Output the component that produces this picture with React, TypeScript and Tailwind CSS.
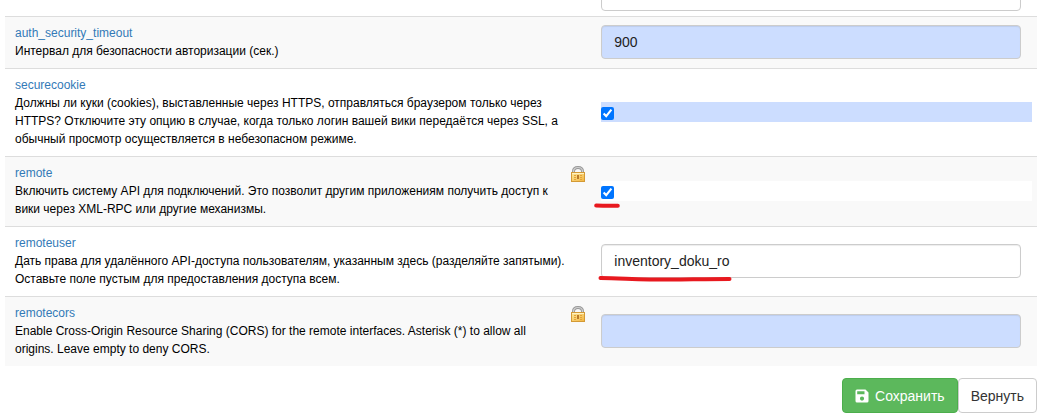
import React, { ReactNode } from "react";

interface Setting {
  id: string;
  description: string;
  type: "text" | "checkbox";
  value?: string;
  isDefault?: boolean;
  locked?: boolean;
  mark?: ReactNode;
}

const settings: Setting[] = [
  {
    id: "auth_security_timeout",
    description: "Интервал для безопасности авторизации (сек.)",
    type: "text",
    value: "900",
    isDefault: true,
  },
  {
    id: "securecookie",
    description:
      "Должны ли куки (cookies), выставленные через HTTPS, отправляться браузером только через\nHTTPS? Отключите эту опцию в случае, когда только логин вашей вики передаётся через SSL, а\nобычный просмотр осуществляется в небезопасном режиме.",
    type: "checkbox",
    isDefault: true,
  },
  {
    id: "remote",
    description:
      "Включить систему API для подключений. Это позволит другим приложениям получить доступ к\nвики через XML-RPC или другие механизмы.",
    type: "checkbox",
    locked: true,
    mark: (
      <svg className="pointer-events-none absolute -left-2 top-5" width="30" height="10" viewBox="0 0 30 10" fill="none" aria-hidden="true">
        <path d="M3.200 4.500 Q14 5 24.800 4.700" stroke="#e8191f" strokeWidth="4" strokeLinecap="round" />
      </svg>
    ),
  },
  {
    id: "remoteuser",
    description:
      "Дать права для удалённого API-доступа пользователям, указанным здесь (разделяйте запятыми).\nОставьте поле пустым для предоставления доступа всем.",
    type: "text",
    value: "inventory_doku_ro",
    mark: (
      <svg className="pointer-events-none absolute -left-1 top-7" width="140" height="12" viewBox="0 0 140 12" fill="none" aria-hidden="true">
        <path d="M3.5 6 C30 6.6 50 7.8 75 7.6 C95 7.4 115 7 132.5 7" stroke="#e8191f" strokeWidth="4" strokeLinecap="round" />
      </svg>
    ),
  },
  {
    id: "remotecors",
    description:
      "Enable Cross-Origin Resource Sharing (CORS) for the remote interfaces. Asterisk (*) to allow all\norigins. Leave empty to deny CORS.",
    type: "text",
    value: "",
    isDefault: true,
    locked: true,
  },
];

const inputClass =
  "block h-[34px] w-full rounded border border-[#ccc] px-3 text-sm text-[#222] shadow-[inset_0_1px_1px_rgba(0,0,0,0.075)]";

function LockIcon() {
  return (
    <svg className="shrink-0" width="16" height="16" viewBox="0 0 16 16" role="img" aria-label="lock">
      <defs>
        <linearGradient id="lockBody" x1="0" y1="0" x2="1" y2="1">
          <stop offset="0" stopColor="#fdeaa0" />
          <stop offset="1" stopColor="#f3b440" />
        </linearGradient>
      </defs>
      <path d="M3.500 7V5.500C3.500 2.900 5.300 1.500 8 1.500s4.500 1.400 4.500 4V7" fill="none" stroke="#999" strokeWidth="3" />
      <path d="M3.500 7V5.500C3.500 2.900 5.300 1.500 8 1.500s4.500 1.400 4.500 4V7" fill="none" stroke="#d0d0d0" strokeWidth="1.200" />
      <rect x="1.500" y="6.500" width="13" height="9" fill="url(#lockBody)" stroke="#d49a35" />
      <path d="M2 7.500h12" stroke="#fff3c4" />
      <path d="M4 9.500h2M10 9.500h2M4 11.500h2M10 11.500h2M4 13.500h2M10 13.500h2" stroke="#e3a437" />
      <rect x="7" y="9" width="2" height="4" fill="#b97a2a" />
    </svg>
  );
}

function SaveIcon() {
  return (
    <svg width="14" height="14" viewBox="0 0 14 14" aria-hidden="true">
      <path
        fill="currentColor"
        fillRule="evenodd"
        d="M2 .5h8.5L13.500 3.500V12a1.500 1.500 0 0 1-1.500 1.500H2A1.500 1.500 0 0 1 .5 12V2A1.500 1.500 0 0 1 2 .5ZM2.200 2.200v3.100h7.300V2.200ZM7 7.500a2.100 2.100 0 1 0 0 4.200 2.100 2.100 0 0 0 0-4.200Z"
      />
    </svg>
  );
}

function SettingRow({ setting }: { setting: Setting }) {
  const { id, description, type, value, isDefault, locked, mark } = setting;

  return (
    <tr className="border-t border-[#ddd] even:bg-[#f9f9f9]">
      <td className="pb-2 pl-2.5 pt-[7px] align-top">
        <div className="flex items-end justify-between pr-[9px]">
          <a href={`#${id}`} className="text-[#337ab7]">
            {id}
          </a>
          {locked && <LockIcon />}
        </div>
        <label htmlFor={id} className="block whitespace-pre-line">
          {description}
        </label>
      </td>
      <td className="pb-2 pl-1.5 pt-1.5 align-middle">
        {type === "text" ? (
          <div className="relative mr-4">
            <input id={id} type="text" defaultValue={value} className={`${inputClass} ${isDefault ? "bg-[#ccddff]" : "bg-white"}`} />
            {mark}
          </div>
        ) : (
          <div className={`relative mr-[5px] flex h-5 items-end pb-0.5 ${isDefault ? "bg-[#ccddff]" : "bg-white"}`}>
            <input id={id} type="checkbox" defaultChecked className="size-[13px] accent-[#0075ff]" />
            {mark}
          </div>
        )}
      </td>
    </tr>
  );
}

export default function App() {
  return (
    <form
      className="bg-white pl-[5px] pr-[15px] font-['Liberation_Sans',Arial,sans-serif] text-xs leading-[18px] text-black"
      onSubmit={(e) => e.preventDefault()}
    >
      <table className="w-full table-fixed border-collapse">
        <colgroup>
          <col className="w-[57.2%]" />
          <col />
        </colgroup>
        <tbody>
          <tr>
            <td />
            <td className="pb-[5px] pl-1.5">
              <div className="mr-4 flex h-[11px] items-end overflow-hidden">
                <input type="text" aria-label="disableactions" className={`${inputClass} shrink-0 bg-white`} />
              </div>
            </td>
          </tr>
          {settings.map((s) => (
            <SettingRow key={s.id} setting={s} />
          ))}
        </tbody>
      </table>

      <div className="flex justify-end pt-3 text-sm">
        <button type="submit" className="flex h-[35px] items-center gap-1.5 rounded border border-[#4cae4c] bg-[#5cb85c] px-3 text-white">
          <SaveIcon />
          Сохранить
        </button>
        <button type="reset" className="h-[35px] rounded border border-[#ccc] bg-white px-3 text-[#333]">
          Вернуть
        </button>
      </div>
    </form>
  );
}
